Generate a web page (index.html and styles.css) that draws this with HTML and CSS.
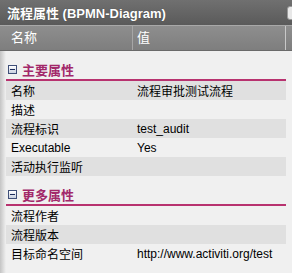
FILE: index.html
```html
<!DOCTYPE html>
<html lang="zh">
<head>
  <meta charset="UTF-8" />
  <title>流程属性</title>
  <link rel="stylesheet" href="styles.css">
</head>
<body>
  <div class="panel">
    <!-- 标题栏 -->
    <div class="titlebar">
      <span class="title">流程属性 (BPMN-Diagram)</span>
      <span class="tb-btn"></span>
    </div>

    <!-- 列头 -->
    <div class="colhead">
      <div class="ch-name">名称</div>
      <div class="ch-value">值</div>
      <div class="ch-rest"></div>
    </div>

    <div class="content">
      <div class="section">
        <div class="sec-head"><span class="toggle"></span>主要属性</div>
        <div class="row alt"><div class="key">名称</div><div class="val">流程审批测试流程</div></div>
        <div class="row"><div class="key">描述</div><div class="val"></div></div>
        <div class="row alt"><div class="key">流程标识</div><div class="val">test_audit</div></div>
        <div class="row"><div class="key">Executable</div><div class="val">Yes</div></div>
        <div class="row alt"><div class="key">活动执行监听</div><div class="val"></div></div>
      </div>

      <div class="section">
        <div class="sec-head"><span class="toggle"></span>更多属性</div>
        <div class="row"><div class="key">流程作者</div><div class="val"></div></div>
        <div class="row alt"><div class="key">流程版本</div><div class="val"></div></div>
        <div class="row"><div class="key">目标命名空间</div><div class="val">http://www.activiti.org/test</div></div>
      </div>
    </div>
  </div>
</body>
</html>
```

FILE: styles.css
```css
* {
  margin: 0;
  padding: 0;
  box-sizing: border-box;
}

html, body {
  width: 100%;
  height: 100%;
  overflow: hidden;
  background: #f0f0f0;
  font-family: 'Liberation Sans', 'Noto Sans CJK SC', sans-serif;
}

.panel {
  display: flex;
  flex-direction: column;
  height: 100%;
}

.titlebar {
  height: 26px;
  display: flex;
  align-items: center;
  justify-content: space-between;
  padding-left: 7px;
  background: linear-gradient(#707070, #5a5a5a);
  border-bottom: 1px solid #a8a8a8;
  overflow: hidden;
}

.title {
  font-size: 13px;
  font-weight: bold;
  color: #fff;
  text-shadow: 0 0 1px rgba(0, 0, 0, 0.4);
}

.tb-btn {
  width: 14px;
  height: 14px;
  margin-right: -9px;
  border: 1px solid #9a9a9a;
  border-radius: 3px;
  background: #e8e8e8;
}

.colhead {
  height: 25px;
  display: flex;
  background: linear-gradient(#8e8e8e, #7e7e7e);
  border-bottom: 1px solid #6a6a6a;
  color: #fff;
  font-size: 13px;
  line-height: 24px;
}

.ch-name {
  width: 133px;
  padding-left: 11px;
  border-right: 1px solid #a6a6a6;
}

.ch-value {
  width: 153px;
  padding-left: 4px;
  border-right: 1px solid #c8c8c8;
}

.ch-rest {
  flex: 1;
}

.content {
  flex: 1;
  padding: 0 6px;
  background: linear-gradient(to right, #c4c4c4, #f0f0f0 6px);
}

.sec-head {
  height: 30px;
  display: flex;
  align-items: center;
  padding-top: 9px;
  padding-left: 2px;
  border-bottom: 2px solid #b8326f;
  color: #a2286a;
  font-size: 13px;
  font-weight: bold;
}

.toggle {
  position: relative;
  width: 9px;
  height: 9px;
  margin-right: 5px;
  border: 1px solid #3f4f78;
  background: linear-gradient(#ffffff, #c8d0e0);
}

.toggle::after {
  content: "";
  position: absolute;
  left: 1px;
  right: 1px;
  top: 3px;
  height: 1px;
  background: #1c2c5c;
}

.row {
  height: 19px;
  display: flex;
  align-items: center;
  font-size: 12px;
  color: #000;
}

.row.alt {
  background: #e0e0e0;
}

.key {
  width: 131px;
  padding-left: 5px;
}

.val {
  flex: 1;
}
```
